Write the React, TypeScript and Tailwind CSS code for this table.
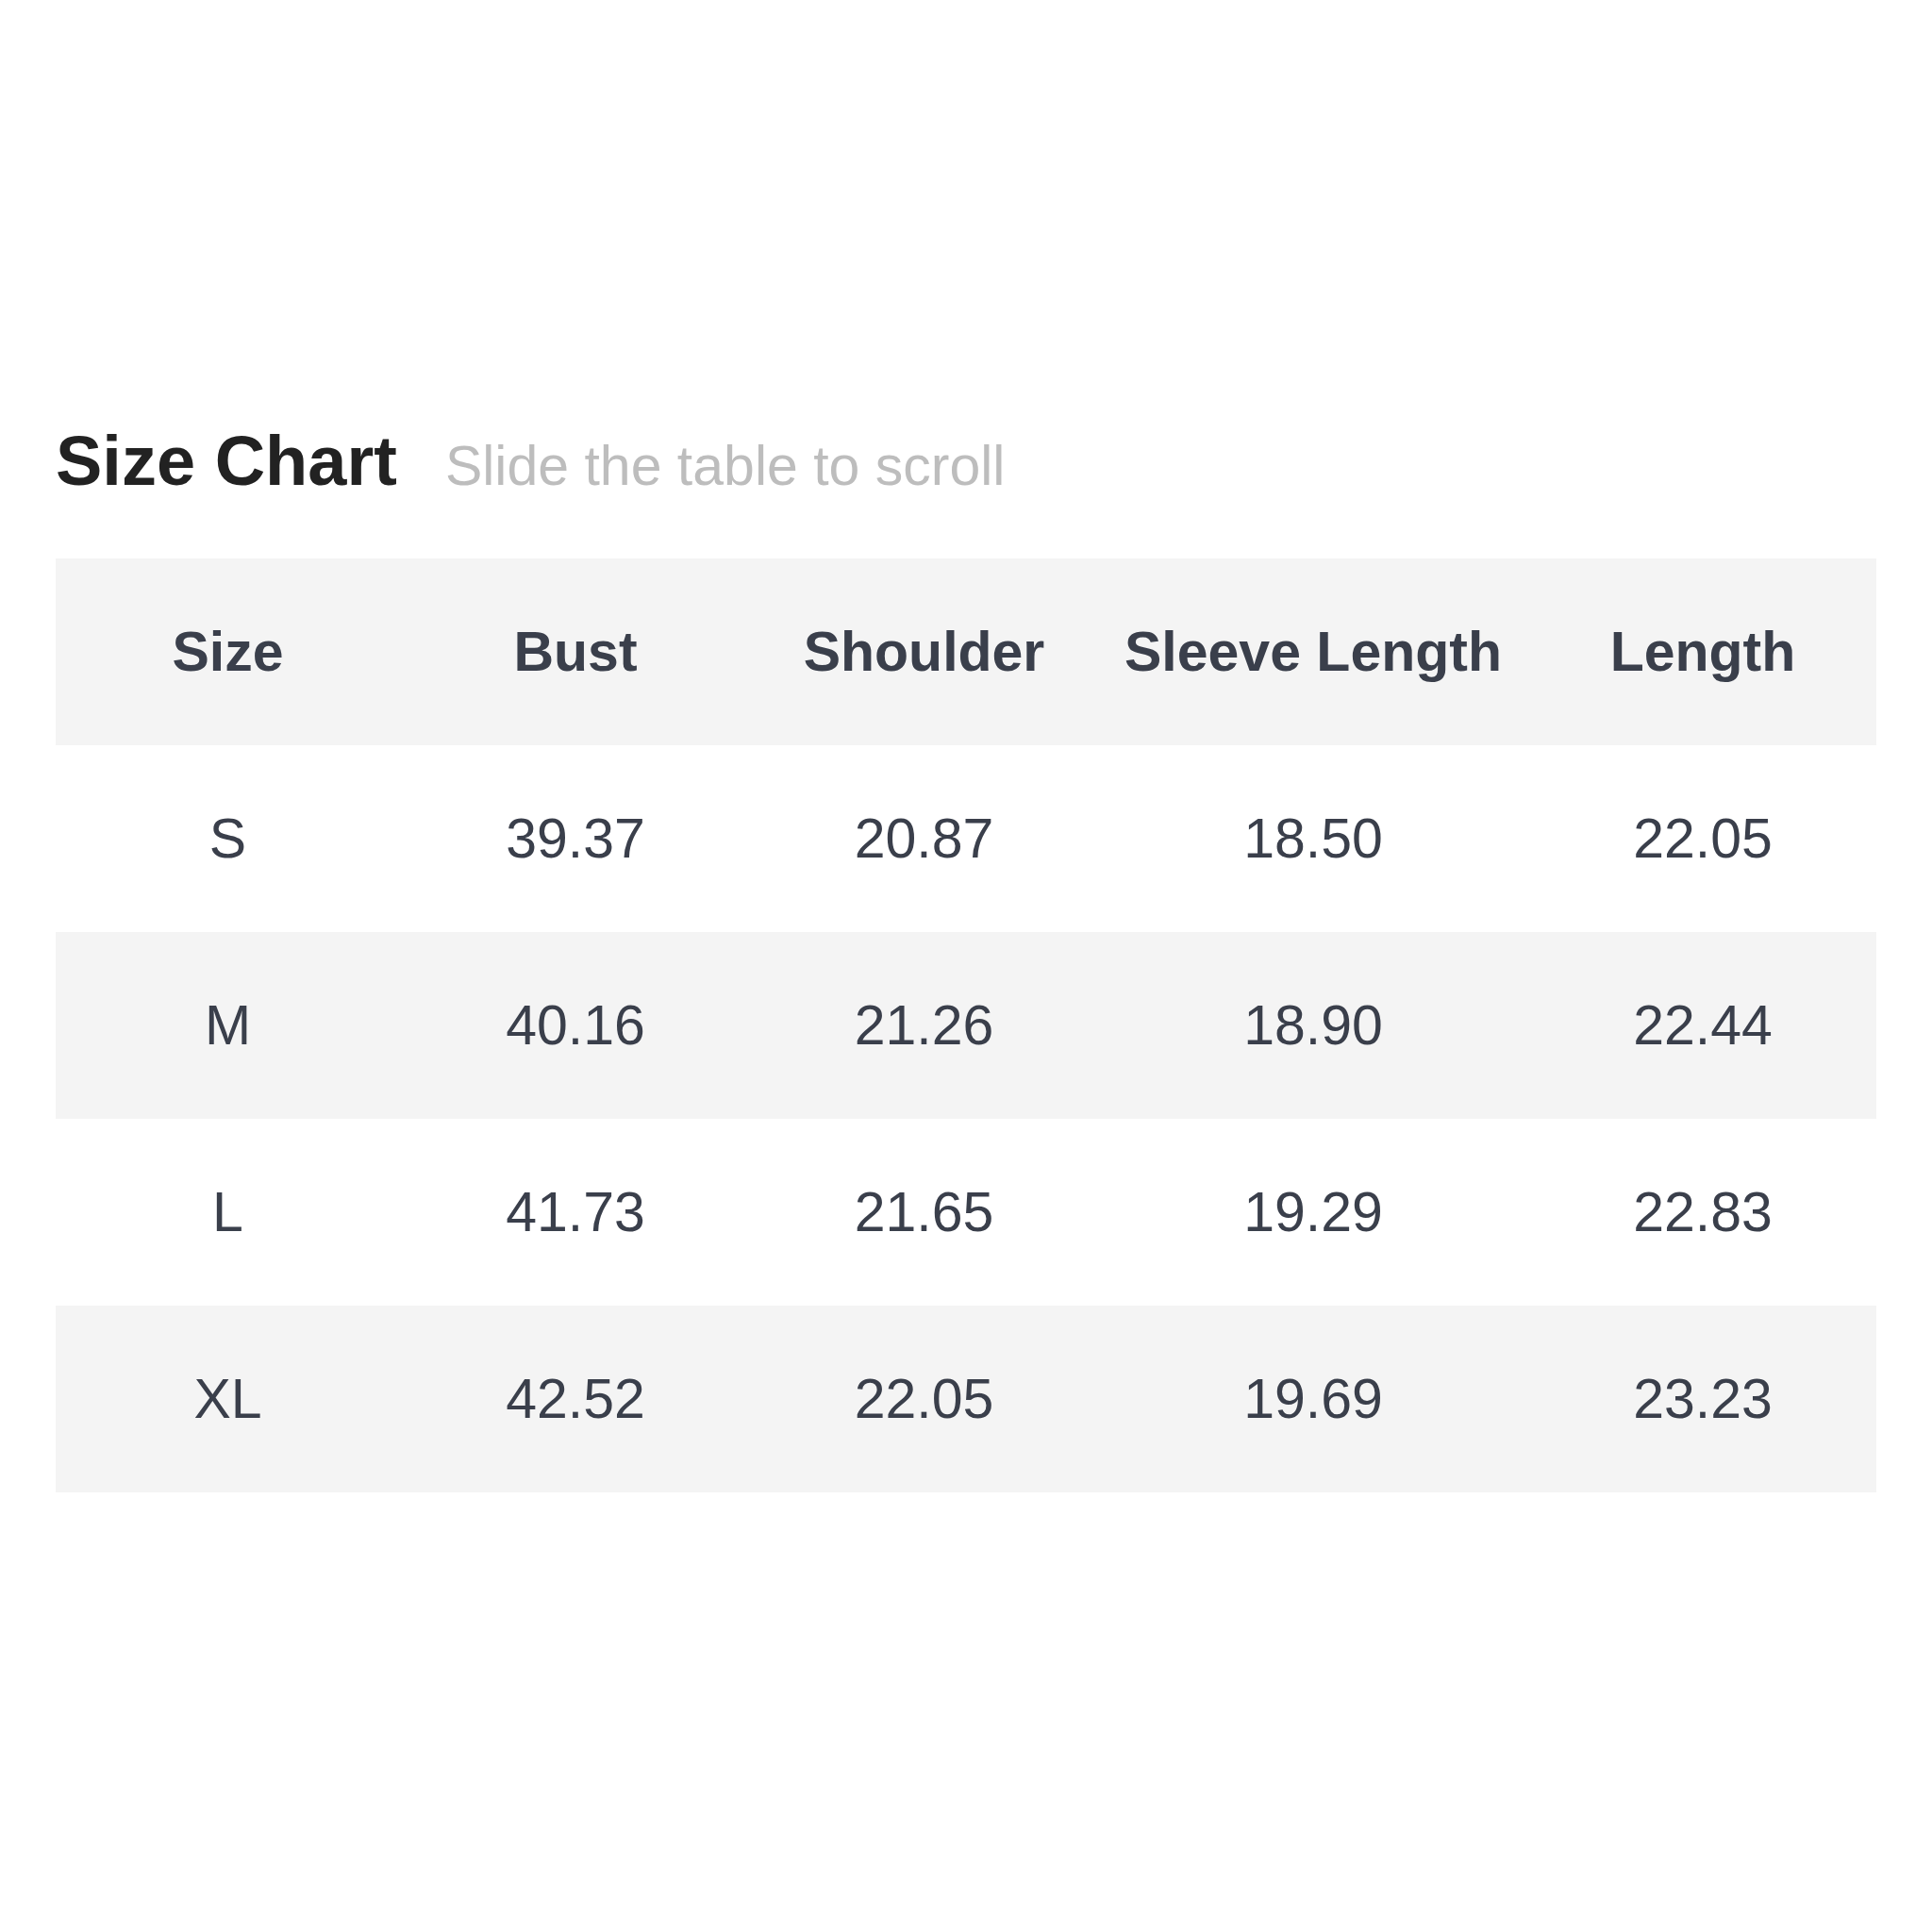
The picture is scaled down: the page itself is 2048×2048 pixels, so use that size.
const headers = ["Size", "Bust", "Shoulder", "Sleeve Length", "Length"];

const rows = [
  ["S", "39.37", "20.87", "18.50", "22.05"],
  ["M", "40.16", "21.26", "18.90", "22.44"],
  ["L", "41.73", "21.65", "19.29", "22.83"],
  ["XL", "42.52", "22.05", "19.69", "23.23"],
];

const cols = "grid grid-cols-[365px_372px_367px_458px_1fr] items-center text-center h-[198px]";

export default function App() {
  return (
    <div className="h-[2048px] w-[2048px] bg-white px-[59px] pt-[452px] font-['Liberation_Sans',Arial,sans-serif]">
      <div className="flex items-baseline gap-[51px] mb-[66px]">
        <h2 className="text-[74px] leading-[74px] font-bold text-[#222222]">Size Chart</h2>
        <span className="text-[59px] leading-[59px] text-[#bdbdbd]">Slide the table to scroll</span>
      </div>

      <div className="w-[1930px] text-[59px] leading-none text-[#3a3f4b]">
        <div className={cols + " bg-[#f4f4f4] font-bold"}>
          {headers.map((h) => (
            <div key={h}>{h}</div>
          ))}
        </div>
        {rows.map((row, i) => (
          <div key={row[0]} className={cols + (i % 2 === 1 ? " bg-[#f4f4f4]" : " bg-white")}>
            {row.map((cell, j) => (
              <div key={j}>{cell}</div>
            ))}
          </div>
        ))}
      </div>
    </div>
  );
}
